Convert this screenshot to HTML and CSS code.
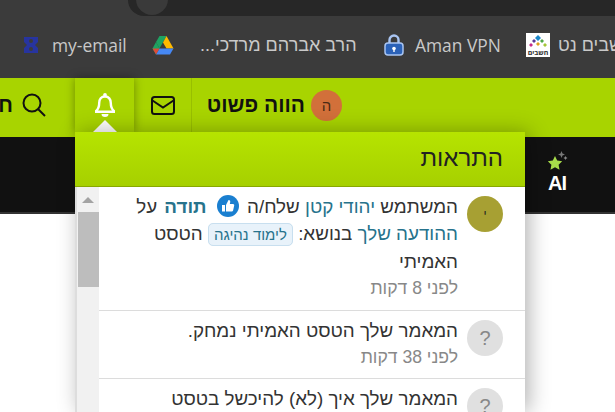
FILE: index.html
```html
<!DOCTYPE html>
<html lang="he">

<head>
    <meta charset="UTF-8">
    <meta name="viewport" content="width=device-width, initial-scale=1.0">
    <title>התראות</title>
    <link rel="stylesheet" href="styles.css">
</head>

<body>
    <div class="tabstrip">
        <div class="addressbar"><span class="addresscircle"></span></div>
    </div>

    <div class="bookmarks">
        <div class="bm bm-mail">
            <svg width="18" height="20" viewBox="0 0 18 20"><path d="M2 2h14v5l-3 3 3 3v5H2v-5l3-3-3-3z" fill="#27349f"/><circle cx="9" cy="6" r="2" fill="#3b3b3b"/><circle cx="9" cy="14" r="2" fill="#3b3b3b"/></svg>
            <span>my-email</span>
        </div>
        <div class="bm bm-drive">
            <svg width="22" height="20" viewBox="0 0 22 20"><path d="M7.500 1h7L7.500 13.500 4 7z" fill="#1ea362"/><path d="M14.500 1l7 12.500h-7L11 7.500z" fill="#ffba00"/><path d="M.5 13.500 4 7l3.500 6.500L4 19.500z" fill="#1ea362"/><path d="M7.500 13.500h14L18 19.500H4z" fill="#4688f4"/><path d="M.5 13.500 4 19.500l3.500-6z" fill="#dd4b39"/></svg>
            <span class="bm-rtl" dir="rtl">הרב אברהם מרדכי...</span>
        </div>
        <div class="bm bm-vpn">
            <svg width="22" height="24" viewBox="0 0 22 24"><path d="M6.500 11V7a4.500 4.500 0 0 1 9 0v4" fill="none" stroke="#a9c5f2" stroke-width="2.400"/><rect x="2" y="10" width="18" height="12" rx="3" fill="#2b62b8" stroke="#a9c5f2" stroke-width="1.500"/><circle cx="11" cy="15.500" r="1.800" fill="#fff"/><rect x="10.300" y="16" width="1.400" height="3" fill="#fff"/></svg>
            <span>Aman VPN</span>
        </div>
        <div class="bm bm-site">
            <div class="siteicon">
                <svg width="20" height="14" viewBox="0 0 20 14"><path d="M10 0l3 3-3 3-3-3z" fill="#1b87c9"/><path d="M6 4l2 2-2 2-2-2z" fill="#5b3a98"/><path d="M14 4l2 2-2 2-2-2z" fill="#4ea84a"/><path d="M3 8l2 2-2 2-2-2z" fill="#c72c8a"/><path d="M10 7l2 2-2 2-2-2z" fill="#e0a020"/><path d="M17 8l2 2-2 2-2-2z" fill="#a4c639"/></svg>
                <span class="sitename">חשבים</span>
            </div>
            <span class="bm-rtl" dir="rtl">חשבים נט</span>
        </div>
    </div>

    <header class="topbar" dir="rtl">
        <div class="brand">
            <span class="brandavatar">ה</span>
            <span class="brandname">הווה פשוט</span>
        </div>
        <div class="iconbtn mailbtn">
            <svg width="24" height="19" viewBox="0 0 24 19" fill="none" stroke="#111" stroke-width="2"><rect x="1" y="1" width="22" height="17" rx="2.500"/><path d="M1.500 4.500 12 11.500l10.500-7"/></svg>
        </div>
        <div class="iconbtn bellbtn">
            <svg width="22" height="24" viewBox="0 0 22 24" fill="none" stroke="#fff" stroke-width="2.400"><path d="M11 3.500c-3.700 0-5.800 2.800-5.800 6.500 0 4.500-1.200 6.300-3 7.800v1h17.600v-1c-1.800-1.500-3-3.300-3-7.800 0-3.700-2.100-6.500-5.800-6.500z"/><circle cx="11" cy="2" r="1.900" fill="#fff" stroke="none"/><path d="M7.500 21h7a3.500 3 0 0 1-7 0z" fill="#fff" stroke="none"/></svg>
            <span class="belltip"></span>
        </div>
        <div class="searchbtn">
            <svg width="24" height="24" viewBox="0 0 24 24" fill="none" stroke="#111" stroke-width="2"><circle cx="10" cy="10" r="8.500"/><path d="M16 16l7 7"/></svg>
            <b class="searchword">חיפוש</b>
        </div>
    </header>

    <nav class="darkbar" dir="rtl">
        <div class="aiitem">
            <svg width="22" height="20" viewBox="0 0 22 20"><path d="M9 5l2.200 4.500 5 .7-3.600 3.500.9 5-4.500-2.400-4.500 2.400.9-5L1.800 10.200l5-.7z" fill="#a7dc4a"/><path d="M15.500 0l1 2.500 2.500 1-2.500 1-1 2.500-1-2.500-2.500-1 2.500-1z" fill="#777"/><path d="M19.500 5l.7 1.300 1.300.7-1.300.7-.7 1.300-.7-1.300-1.300-.7 1.300-.7z" fill="#888"/></svg>
            <b>AI</b>
        </div>
    </nav>

    <div class="dropdown" dir="rtl">
        <div class="drophead">התראות</div>
        <div class="dropbody">
            <div class="items">
                <div class="item">
                    <span class="avatar avatar-user">י</span>
                    <div class="itemtext">
                        <div class="msg">המשתמש <a>יהודי קטן</a> שלח/ה
                            <svg class="thumb" width="22" height="22" viewBox="0 0 22 22"><circle cx="11" cy="11" r="11" fill="#1a7fd0"/><path d="M9 10l2.500-5c1.300 0 2 .9 1.700 2.200L12.800 9H16c.9 0 1.400.8 1.200 1.600l-1.100 5c-.2.600-.7 1-1.300 1H9z" fill="#fff"/><rect x="5" y="10" width="3" height="6.500" fill="#fff"/></svg>
                            <a class="strong">תודה</a> על <a>ההודעה שלך</a> בנושא: <span class="tag">לימוד נהיגה</span> הטסט האמיתי</div>
                        <div class="when">לפני 8 דקות</div>
                    </div>
                </div>
                <div class="item">
                    <span class="avatar avatar-unknown">?</span>
                    <div class="itemtext">
                        <div class="msg">המאמר שלך הטסט האמיתי נמחק.</div>
                        <div class="when">לפני 38 דקות</div>
                    </div>
                </div>
                <div class="item">
                    <span class="avatar avatar-unknown">?</span>
                    <div class="itemtext">
                        <div class="msg">המאמר שלך איך (לא) להיכשל בטסט</div>
                    </div>
                </div>
            </div>
            <div class="scroller">
                <span class="arrow"></span>
                <span class="thumbbar"></span>
            </div>
        </div>
    </div>
</body>

</html>
```

FILE: styles.css
```css
* {
    box-sizing: border-box;
}

html,
body {
    margin: 0;
    height: 412px;
    overflow: hidden;
    background-color: #fff;
    font-family: "Liberation Sans", sans-serif;
}

.tabstrip {
    height: 16px;
    background-color: #3b3b3b;
    padding-left: 128px;
}

.addressbar {
    height: 16px;
    background-color: #272727;
    border-radius: 0 0 0 16px;
    padding-left: 8px;
    overflow: hidden;
}

.addresscircle {
    display: block;
    width: 32px;
    height: 32px;
    margin-top: -17px;
    border-radius: 50%;
    background-color: #3a3a3a;
}

.bookmarks {
    height: 62px;
    background-color: #3b3b3b;
    display: flex;
    align-items: center;
    padding-left: 22px;
    padding-bottom: 4px;
    overflow: hidden;
    white-space: nowrap;
    font-family: "Open Sans", sans-serif;
    font-size: 17.4px;
    color: #c9c9c9;
}

.bm-rtl {
    font-family: "Liberation Sans", sans-serif;
    font-size: 18px;
}

.bm {
    display: flex;
    align-items: center;
    flex-shrink: 0;
}

.bm-mail {
    width: 130px;
    gap: 12px;
}

.bm-drive {
    width: 231px;
    gap: 26px;
}

.bm-vpn {
    width: 143px;
    gap: 10px;
}

.bm-site {
    width: 150px;
    gap: 8px;
}

.siteicon {
    width: 24px;
    height: 24px;
    background-color: #fff;
    display: flex;
    flex-direction: column;
    align-items: center;
    padding-top: 2px;
}

.sitename {
    font-size: 7px;
    line-height: 8px;
    font-weight: bold;
    color: #333;
}

.topbar {
    height: 59px;
    background-color: #a8d400;
    display: flex;
    align-items: center;
    padding-right: 273px;
    padding-bottom: 5px;
    white-space: nowrap;
}

.brand {
    display: flex;
    align-items: center;
    gap: 6px;
    width: 151px;
    height: 100%;
    border-left: 1px solid #98bf00;
    flex-shrink: 0;
}

.brandavatar {
    width: 31px;
    height: 31px;
    border-radius: 50%;
    background-color: #d2703a;
    color: #4a2a14;
    font-size: 15px;
    display: flex;
    align-items: center;
    justify-content: center;
}

.brandname {
    font-size: 21px;
    font-weight: bold;
    color: #111;
}

.iconbtn {
    height: 100%;
    flex-shrink: 0;
    display: flex;
    align-items: center;
    justify-content: center;
}

.mailbtn {
    width: 57px;
}

.bellbtn {
    position: relative;
    width: 59px;
    background-color: #a8d400;
    box-shadow: 0 0 9px rgba(0, 0, 0, 0.35);
}

.belltip {
    position: absolute;
    left: 18px;
    top: 42px;
    border-left: 12px solid transparent;
    border-right: 12px solid transparent;
    border-bottom: 12px solid #fff;
}

.searchbtn {
    display: flex;
    align-items: center;
    gap: 9px;
    margin-right: 29px;
    flex-shrink: 0;
}

.searchword {
    font-size: 21px;
    color: #111;
}

.darkbar {
    height: 77px;
    background-color: #111;
    border-bottom: 2px solid #333;
    display: flex;
    align-items: flex-start;
    padding-right: 47px;
}

.aiitem {
    display: flex;
    flex-direction: column;
    align-items: center;
    padding-top: 14px;
    gap: 1px;
    color: #fff;
    font-size: 20px;
    letter-spacing: -1px;
    line-height: 22px;
}

.dropdown {
    position: absolute;
    left: 75px;
    top: 132px;
    width: 450px;
    height: 280px;
    background-color: #fff;
    box-shadow: 4px 0 20px rgba(0, 0, 0, 0.3);
}

.drophead {
    height: 55px;
    padding: 6px 22px 0 0;
    font-size: 24px;
    line-height: 40px;
    color: #222;
    background: linear-gradient(#b6e400, #a6d000);
    border-bottom: 1px solid #88a800;
}

.dropbody {
    display: flex;
    height: 225px;
    overflow: hidden;
}

.items {
    flex: 1;
}

.item {
    display: flex;
    gap: 9px;
    padding: 9px 22px 6px 0;
    border-bottom: 1px solid #dcdcdc;
    height: 68px;
}

.item:first-child {
    height: 124px;
}

.avatar {
    width: 36px;
    height: 36px;
    border-radius: 50%;
    flex-shrink: 0;
    display: flex;
    align-items: center;
    justify-content: center;
}

.avatar-user {
    background-color: #a7a033;
    color: #222;
    font-size: 12px;
}

.avatar-unknown {
    background-color: #e0e0e0;
    color: #888;
    font-size: 20px;
}

.itemtext {
    flex: 1;
    margin-top: -3px;
}

.msg {
    font-size: 18.8px;
    line-height: 27px;
    color: #333;
}

.msg a {
    color: #27738c;
}

.msg .strong {
    font-weight: bold;
    margin: 0 2px;
}

.thumb {
    vertical-align: -4px;
    margin: 0 3px;
}

.tag {
    font-size: 15px;
    color: #27738c;
    background-color: #e8f2fa;
    border: 1px solid #c8dfef;
    border-radius: 5px;
    padding: 2px 5px;
}

.when {
    font-size: 17.6px;
    line-height: 26px;
    color: #888;
}

.scroller {
    width: 24px;
    flex-shrink: 0;
    background-color: #f1f1f1;
    border-left: 2px solid #ddd;
    display: flex;
    flex-direction: column;
    align-items: center;
    padding-top: 10px;
}

.arrow {
    border-left: 6px solid transparent;
    border-right: 6px solid transparent;
    border-bottom: 6px solid #a3a3a3;
    margin-bottom: 9px;
}

.thumbbar {
    width: 21px;
    height: 75px;
    background-color: #bdbdbd;
}
```
